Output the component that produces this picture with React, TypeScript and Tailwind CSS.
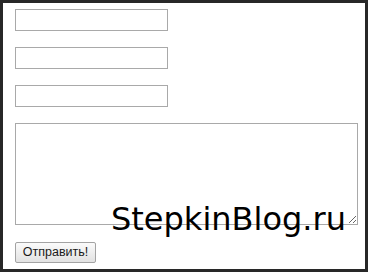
import React from 'react';

const App: React.FC = () => {
  return (
    <div className="w-[368px] h-[272px] border-[3px] border-[#282828] bg-white relative overflow-hidden">
      <form className="flex flex-col items-start pl-[12px] pt-[6px]" onSubmit={(e) => e.preventDefault()}>
        {/* Name / email / subject */}
        <input type="text" className="w-[153px] h-[22px] border border-[#a9a9a9] outline-none" />
        <input type="text" className="w-[153px] h-[22px] border border-[#a9a9a9] outline-none mt-[16px]" />
        <input type="text" className="w-[153px] h-[22px] border border-[#a9a9a9] outline-none mt-[16px]" />

        {/* Message */}
        <textarea className="w-[343px] h-[102px] border border-[#a9a9a9] outline-none mt-[16px] resize block" />

        {/* Submit */}
        <button
          type="submit"
          className="mt-[17px] w-[81px] h-[21px] border border-[#a3a3a3] rounded-[2px] bg-gradient-to-b from-[#fbfbfb] to-[#e2e2e2] text-[12.5px] leading-none text-[#1a1a1a]"
          style={{ fontFamily: '"Liberation Sans", Arial, sans-serif' }}
        >
          Отправить!
        </button>
      </form>

      {/* Watermark over the textarea */}
      <div
        className="absolute left-[108px] top-[196px] text-[32px] leading-[40px] text-black pointer-events-none whitespace-nowrap"
        style={{ fontFamily: '"DejaVu Sans", Verdana, sans-serif' }}
      >
        StepkinBlog.ru
      </div>
    </div>
  );
};

export default App;
